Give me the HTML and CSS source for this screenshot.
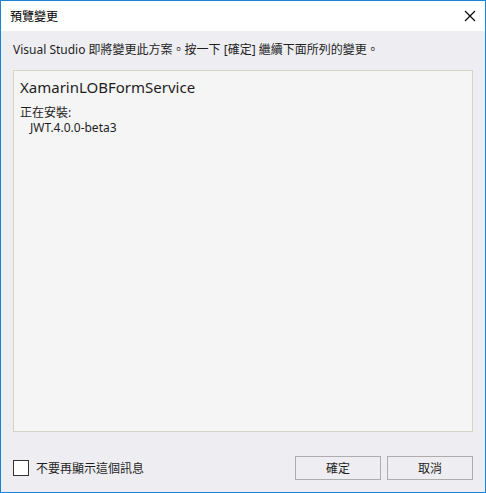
FILE: index.html
```html
<!DOCTYPE html>
<html lang="zh-Hant">
<head>
<meta charset="utf-8">
<link rel="stylesheet" href="styles.css">
</head>
<body>
<div class="window">
  <div class="titlebar">
    <span class="title">預覽變更</span>
    <span class="close" aria-label="關閉">
      <svg width="12" height="12" viewBox="0 0 12 12"><path d="M1 1 L11 11 M11 1 L1 11" stroke="#000" stroke-width="1.1" fill="none"/></svg>
    </span>
  </div>
  <div class="content">
    <p class="intro">Visual Studio 即將變更此方案。按一下 [確定] 繼續下面所列的變更。</p>
    <div class="panel">
      <div class="project">XamarinLOBFormService</div>
      <div class="label">正在安裝:</div>
      <div class="pkg">JWT.4.0.0-beta3</div>
    </div>
    <div class="footer">
      <label class="check"><span class="box"></span><span>不要再顯示這個訊息</span></label>
      <div class="buttons">
        <button class="btn">確定</button>
        <button class="btn">取消</button>
      </div>
    </div>
  </div>
</div>
</body>
</html>
```
FILE: styles.css
```css
* { box-sizing: border-box; }
html, body { margin: 0; padding: 0; }
body {
  font-family: "Noto Sans", "Noto Sans CJK TC", sans-serif;
  font-size: 12px;
  color: #1e1e1e;
  background: #eeeef2;
}
.window {
  width: 486px;
  height: 493px;
  border: 1px solid #1883d7;
  display: flex;
  flex-direction: column;
}
.titlebar {
  height: 30px;
  background: #fff;
  display: flex;
  align-items: center;
  justify-content: space-between;
  padding-left: 9px;
  padding-right: 9px;
}
.title { font-size: 12px; color: #000; }
.close { display: flex; width: 12px; height: 12px; }
.content {
  flex: 1;
  background: #eeeef2;
  display: flex;
  flex-direction: column;
  padding: 11px 12px 12px 12px;
}
.intro {
  margin: 0;
  line-height: 16px;
  height: 16px;
  padding-left: 0;
}
.panel {
  margin-top: 12px;
  height: 362px;
  background: #f5f5f5;
  border: 1px solid #d2d4c6;
  padding: 6px 6px;
}
.project { font-size: 15px; line-height: 20px; }
.label { margin-top: 8px; line-height: 15px; }
.pkg { padding-left: 10px; line-height: 15px; }
.footer {
  margin-top: auto;
  display: flex;
  align-items: center;
  justify-content: space-between;
}
.check { display: flex; align-items: center; gap: 7px; }
.box {
  width: 16px; height: 16px;
  border: 1px solid #333;
  background: #fff;
}
.buttons { display: flex; gap: 6px; }
.btn {
  width: 86px;
  height: 24px;
  font: inherit;
  color: #1e1e1e;
  background: #eeeef2;
  border: 1px solid #adadad;
  padding: 0;
}
```
